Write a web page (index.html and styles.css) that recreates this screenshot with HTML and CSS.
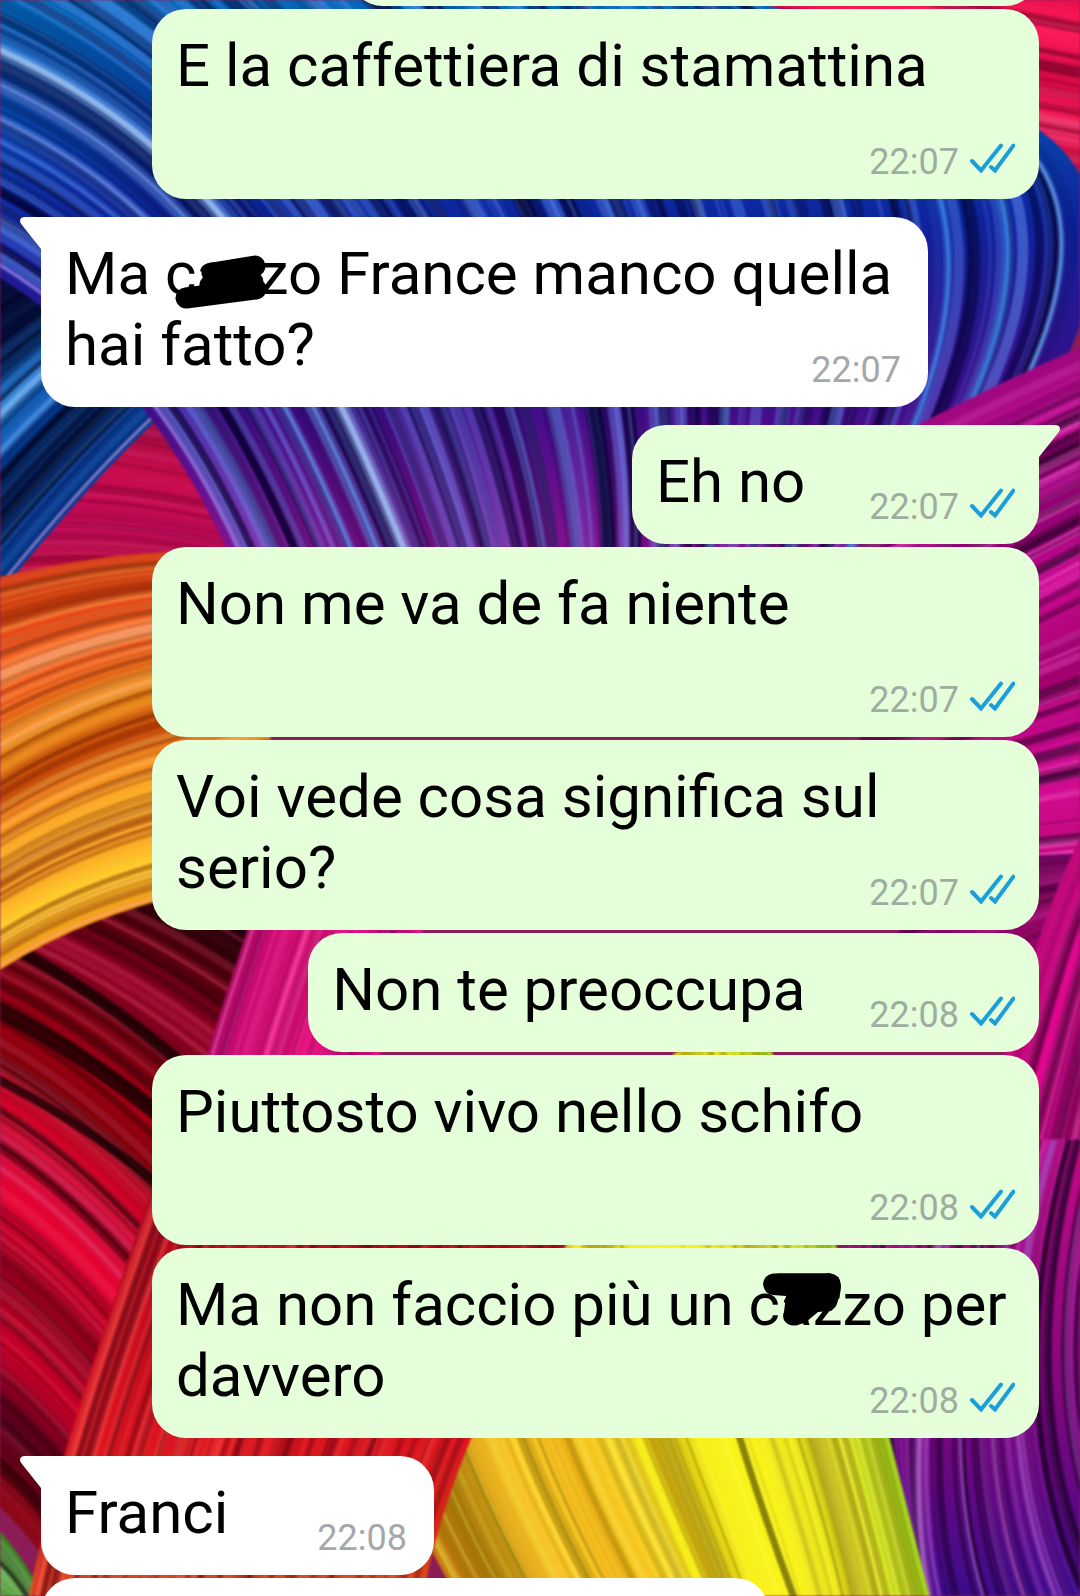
FILE: index.html
```html
<!DOCTYPE html>
<html lang="it">
<head>
<meta charset="utf-8">
<meta name="viewport" content="width=device-width, initial-scale=1">
<title>Chat</title>
<link rel="stylesheet" href="styles.css">
</head>
<body>
<svg class="wallpaper" id="wallpaper" viewBox="0 0 1080 1596" preserveAspectRatio="xMidYMid slice" aria-hidden="true">
  <defs>
    <linearGradient id="blue-violet" gradientUnits="userSpaceOnUse" x1="0" y1="0" x2="0" y2="550">
      <stop offset="0" stop-color="#0468b8"/><stop offset=".2" stop-color="#0848ac"/><stop offset=".4" stop-color="#0e239c"/><stop offset=".72" stop-color="#3a0d88"/><stop offset="1" stop-color="#84128f"/>
    </linearGradient>
    <linearGradient id="magenta-indigo" gradientUnits="userSpaceOnUse" x1="0" y1="1150" x2="0" y2="1596">
      <stop offset="0" stop-color="#c20a86"/><stop offset=".5" stop-color="#86087e"/><stop offset=".75" stop-color="#640882"/><stop offset="1" stop-color="#3c0c8c"/>
    </linearGradient>
    <linearGradient id="red-orange" gradientUnits="userSpaceOnUse" x1="0" y1="1200" x2="0" y2="1596">
      <stop offset="0" stop-color="#ae061c"/><stop offset=".6" stop-color="#dc1420"/><stop offset=".85" stop-color="#d02c18"/><stop offset="1" stop-color="#e0581c"/>
    </linearGradient>
  </defs>
</svg>

<svg class="sprite" aria-hidden="true">
  <symbol id="ticks" viewBox="0 0 45 30">
    <path d="M2 18 11 27.500 31 2.500M21 24 25 27.500 43.500 2.500" fill="none" stroke="#1b9fdb" stroke-width="4" stroke-linecap="round" stroke-linejoin="miter"/>
  </symbol>
</svg>

<main class="chat">
  <div class="group group--sent">
    <article class="bubble bubble--first"></article>
    <article class="bubble"><p>E la caffettiera di stamattina</p><span class="meta"><time>22:07</time><svg class="ticks" role="img" aria-label="Letto"><use href="#ticks"/></svg></span></article>
  </div>
  <div class="group group--received">
    <article class="bubble bubble--tail"><p>Ma cazzo France manco quella hai fatto?</p><span class="meta"><time>22:07</time></span><svg class="scribble scribble--near" viewBox="0 0 110 72" aria-hidden="true"><path d="M21 60 91 51M47 35 90 28M50 44 88 44" fill="none" stroke="#000" stroke-width="21" stroke-linecap="round"/></svg></article>
  </div>
  <div class="group group--sent">
    <article class="bubble bubble--tail"><p>Eh no</p><span class="meta"><time>22:07</time><svg class="ticks" role="img" aria-label="Letto"><use href="#ticks"/></svg></span></article>
    <article class="bubble bubble--stacked"><p>Non me va de fa niente</p><span class="meta"><time>22:07</time><svg class="ticks" role="img" aria-label="Letto"><use href="#ticks"/></svg></span></article>
    <article class="bubble"><p>Voi vede cosa significa sul serio?</p><span class="meta"><time>22:07</time><svg class="ticks" role="img" aria-label="Letto"><use href="#ticks"/></svg></span></article>
    <article class="bubble"><p>Non te preoccupa</p><span class="meta"><time>22:08</time><svg class="ticks" role="img" aria-label="Letto"><use href="#ticks"/></svg></span></article>
    <article class="bubble"><p>Piuttosto vivo nello schifo</p><span class="meta"><time>22:08</time><svg class="ticks" role="img" aria-label="Letto"><use href="#ticks"/></svg></span></article>
    <article class="bubble"><p>Ma non faccio più un cazzo per davvero</p><span class="meta"><time>22:08</time><svg class="ticks" role="img" aria-label="Letto"><use href="#ticks"/></svg></span><svg class="scribble scribble--far" viewBox="0 0 110 72" aria-hidden="true"><path d="M24 4.500C36 3.500 64 5 80 4Q91 5 92 16Q92 24 89 30Q89 37 82 42L69 43 57 53Q48 58 39 54Q33 51 35 43L37 27 24 26Q15 25 14 15Q15 6 24 4.500Z"/></svg></article>
  </div>
  <div class="group group--received">
    <article class="bubble bubble--tail"><p>Franci</p><span class="meta"><time>22:08</time></span></article>
    <article class="bubble bubble--last"></article>
  </div>
</main>
<script src="wallpaper.js"></script>
</body>
</html>
```
FILE: styles.css
```css
* {
  box-sizing: border-box;
}

body {
  margin: 0;
  background: #8c1c58;
  color: #000;
  font-family: Roboto, "Liberation Sans", sans-serif;
}

.wallpaper {
  position: fixed;
  inset: 0;
  width: 100%;
  height: 100%;
  background: #8c1c58;
  filter: blur(1px);
}

.sprite {
  position: absolute;
  width: 0;
  height: 0;
}

.chat {
  position: relative;
  display: flex;
  flex-direction: column;
  gap: 18px;
  height: 100vh;
  padding: 0 41px;
  overflow: hidden;
}

.group {
  display: flex;
  flex: none;
  flex-direction: column;
  gap: 3px;
}

.group--sent {
  --bubble: #e5ffda;
  --meta-gap: 64px;
  --meta: #9eada0;
  align-items: flex-end;
}

.group--received {
  --bubble: #fff;
  --meta-gap: 89px;
  --meta: #a5a8ab;
  align-items: flex-start;
}

.bubble {
  position: relative;
  display: flow-root;
  min-height: 119px;
  max-width: calc(100% - 111px);
  padding: 21px 24px 0;
  border-radius: 34px;
  background: var(--bubble);
}

/* The list is scrolled: only the lower edge of this bubble is in view. */
.bubble--first {
  width: 690px;
  margin-top: -113px;
}

.bubble--last {
  width: 728px;
}

/* The footer of this bubble has a line of its own. */
.bubble--stacked {
  width: 100%;
}

.bubble p {
  display: inline;
  margin: 0;
  font-size: 60px;
  line-height: 71px;
}

.bubble--stacked p {
  display: block;
}

.group--received .bubble--tail {
  border-top-left-radius: 0;
}

.group--sent .bubble--tail {
  border-top-right-radius: 0;
}

.bubble--tail::before {
  content: "";
  position: absolute;
  top: 0;
  left: -21px;
  width: 22px;
  height: 33px;
  background: var(--bubble);
  clip-path: path("M22 0H5Q0 0 0 4Q0 6 2 8L21 32H22Z");
}

.group--sent .bubble--tail::before {
  right: -21px;
  left: auto;
  transform: scaleX(-1);
}

.meta {
  float: right;
  display: flex;
  align-items: flex-end;
  gap: 11px;
  height: 98px;
  margin-left: var(--meta-gap);
  padding-bottom: 16px;
  color: var(--meta);
  font-size: 36px;
  line-height: 42px;
}

.group--received .meta {
  padding-right: 3px;
}

.ticks {
  width: 45px;
  height: 30px;
  margin-bottom: 10px;
}

/* Hand-drawn marks that cover part of a word. */
.scribble {
  position: absolute;
  top: 21px;
  width: 110px;
  height: 72px;
}

.scribble--near {
  left: 124px;
}

.scribble--far {
  left: 597px;
}
```
FILE: wallpaper.js
```js
// Draws the wallpaper: ribbons of fine strands, each one blended between guide curves.
const svg = document.getElementById("wallpaper");
let seed = 7;
const rnd = () => {
  seed = (seed * 16807) % 2147483647;
  return seed / 2147483647;
};
const mix = (list, t) => {
  const p = Math.min(t, 0.9999) * (list.length - 1);
  const i = Math.floor(p);
  return list[i].map((v, k) => v + (list[i + 1][k] - v) * (p - i));
};
const hex = (c) => [1, 3, 5].map((i) => parseInt(c.slice(i, i + 2), 16));

function stroke(g, paint, width, opacity) {
  const el = document.createElementNS("http://www.w3.org/2000/svg", "path");
  el.setAttribute("d", `M${g[0]} ${g[1]}C${g[2]} ${g[3]} ${g[4]} ${g[5]} ${g[6]} ${g[7]}`);
  el.setAttribute("fill", "none");
  el.setAttribute("stroke", paint);
  el.setAttribute("stroke-width", width);
  el.setAttribute("stroke-opacity", opacity);
  svg.appendChild(el);
}

function ribbon({ guides, colors, paint, n, light = "#ffffff", dark = "#000000", power = 0.4, shine = [], edge }) {
  const span = Math.max(...[0, 2, 4, 6].map((k) => {
    let d = 0;
    for (let i = 1; i < guides.length; i++) {
      d += Math.hypot(guides[i][k] - guides[i - 1][k], guides[i][k + 1] - guides[i - 1][k + 1]);
    }
    return d;
  }));
  const step = span / n;
  const palette = colors && colors.map(hex);
  for (let i = 0; i <= n; i++) {
    const t = i / n;
    const c = palette ? `rgb(${mix(palette, t).map(Math.round)})` : paint;
    stroke(mix(guides, t), c, step * 1.8, 1);
  }
  for (let i = 0; i < n * 1.4; i++) {
    const t = rnd();
    const lit = rnd() > 0.52;
    stroke(mix(guides, t), lit ? light : dark, 2 + rnd() * step, rnd() * power * (lit ? 0.5 : 0.85));
  }
  shine.forEach(([t, w, c]) => {
    stroke(mix(guides, t), c, w * 2.4, 0.3);
    stroke(mix(guides, t), c, w, 0.75);
  });
  if (edge) stroke(guides[edge.at], edge.color, 3, 0.8);
}

// Magenta ground behind the upper part
ribbon({
  guides: [[-20, 400, 100, 410, 180, 430, 300, 460], [-20, 600, 100, 580, 200, 590, 300, 620]],
  colors: ["#a00c40", "#c80c4c", "#c00a58", "#b00c30"], n: 26, light: "#ff4fa0", dark: "#50001c"
});
// Crimson strands, upper right
ribbon({
  guides: [[720, -60, 850, -50, 980, -30, 1120, 0], [720, 120, 850, 130, 980, 160, 1120, 185]],
  colors: ["#e00a48", "#ff1c5c", "#d80a48", "#f01450", "#b80838"], n: 26, light: "#ff6b9c", dark: "#6c0024", power: 0.6
});
// Dark blue band running up from the left
ribbon({
  guides: [[-20, 250, 30, 230, 100, 200, 180, 150], [-10, 425, 50, 360, 100, 330, 200, 240], [0, 585, 70, 500, 130, 430, 250, 330]],
  colors: ["#101c80", "#06103c", "#020a34", "#1870c8", "#06409c", "#041a58", "#083c94"], n: 60,
  light: "#3d8ce6", dark: "#000014", power: 0.6, shine: [[0.5, 6, "#78b4f0"], [0.61, 4, "#4a90e0"]], edge: { at: 2, color: "#9a8cd8" }
});
// Wide band turning from blue into violet
ribbon({
  guides: [
    [-5, 262, 90, 320, 170, 400, 240, 552],
    [-5, 48, 200, 140, 300, 290, 405, 552],
    [-30, -190, 380, 20, 510, 320, 545, 552],
    [440, -140, 745, 80, 760, 330, 715, 552],
    [990, 120, 1135, 160, 1115, 340, 920, 552]
  ],
  paint: "url(#blue-violet)", n: 130, light: "#6fa0ff", dark: "#02002c", power: 0.75,
  shine: [[0.25, 6, "#a7cfff"], [0.17, 4, "#6890f0"], [0.21, 2, "#6890e8"], [0.91, 4, "#3f88e8"], [0.95, 5, "#3c88e4"], [0.985, 3, "#68a4f0"]],
  edge: { at: 0, color: "#9a74dc" }
});
// Magenta strands along the right side
ribbon({
  guides: [[860, 462, 960, 410, 1030, 375, 1110, 342], [860, 660, 960, 640, 1030, 600, 1110, 555], [860, 872, 960, 862, 1040, 854, 1110, 848]],
  colors: ["#a00880", "#c00890", "#8c0070", "#cc0c94", "#a0006c", "#d60c98", "#c4087c"], n: 70,
  light: "#ff70dc", dark: "#30002c", power: 0.7, edge: { at: 2, color: "#f14cc8" }
});
ribbon({
  guides: [[900, 870, 960, 868, 1030, 864, 1110, 860], [900, 1000, 960, 970, 1030, 950, 1110, 910]],
  colors: ["#70045c", "#980468"], n: 14, light: "#d850a0", dark: "#200018"
});
ribbon({
  guides: [[1110, 800, 1060, 880, 1040, 960, 1010, 1060], [1130, 900, 1085, 1010, 1065, 1150, 1020, 1300], [1160, 1000, 1130, 1100, 1120, 1200, 1110, 1300]],
  colors: ["#c00878", "#e00890", "#a80474", "#d4088c", "#b80a90"], n: 40, light: "#ff50bc", dark: "#5c0040", power: 0.6
});
// Maroon and crimson folds, left
ribbon({
  guides: [[-20, 830, 100, 860, 220, 910, 320, 990], [-20, 1000, 80, 1050, 180, 1140, 260, 1240], [-20, 1180, 60, 1230, 130, 1310, 200, 1410], [-20, 1480, 20, 1510, 60, 1560, 90, 1620]],
  colors: ["#24000c", "#54000c", "#8c0024", "#6c0010", "#a80018", "#800008", "#d00428", "#c80430", "#e80434", "#90001c", "#c80028", "#50001c", "#8c0818"],
  n: 80, light: "#ff4f78", dark: "#180000", power: 0.5,
  shine: [[0.56, 6, "#cc2450"], [0.62, 4, "#e02c5c"]]
});
for (const [t, w] of [[950, 12], [1020, 16], [1090, 9]]) {
  stroke([-20, t - 20, 80, t + 30, 150, t + 80, 280, t + 200], "#0c0000", w, 0.75);
}
// Green corner
ribbon({
  guides: [[-10, 1530, 0, 1540, 18, 1560, 38, 1600], [-10, 1600, 0, 1600, 10, 1605, 20, 1610]],
  colors: ["#387c20", "#78b860", "#489830"], n: 10
});
// Orange to yellow arc, left
ribbon({
  guides: [[-10, 583, 80, 562, 160, 550, 270, 556], [-10, 770, 90, 705, 180, 685, 270, 665], [-10, 972, 50, 932, 120, 900, 270, 870]],
  colors: ["#d8401c", "#d04010", "#ec4c1c", "#f8702c", "#f85820", "#ec7c1c", "#f0901c", "#c84808", "#f89020", "#fcb42c", "#f8a024", "#ffd02c", "#f0a018"], n: 90,
  light: "#ffc45c", dark: "#782000", power: 0.6, shine: [[0.26, 8, "#ffa470"], [0.45, 4, "#ffac58"]], edge: { at: 2, color: "#ffa060" }
});
// Magenta band crossing the centre
ribbon({
  guides: [[254, 925, 240, 970, 225, 1010, 208, 1070], [420, 925, 400, 970, 390, 1010, 370, 1070]],
  colors: ["#b00868", "#d40c78", "#b80460", "#f01888", "#c00470", "#e01480"], n: 30, light: "#ff5cae", dark: "#680040", power: 0.5,
  shine: [[0.33, 4, "#ff3c9c"]], edge: { at: 0, color: "#d84890" }
});
// Violet strands, lower right
ribbon({
  guides: [[850, 1240, 860, 1400, 900, 1530, 905, 1620], [940, 1240, 915, 1400, 910, 1530, 935, 1620], [1040, 1140, 980, 1320, 985, 1500, 1050, 1640], [1085, 1140, 1030, 1360, 1060, 1520, 1140, 1640], [1150, 1140, 1085, 1300, 1090, 1420, 1170, 1600]],
  paint: "url(#magenta-indigo)", n: 70, light: "#c060d8", dark: "#180024", power: 0.65,
  shine: [[0.25, 5, "#b060c8"], [0.38, 2, "#9850c0"], [0.48, 3, "#a044b4"], [0.57, 3, "#9848b8"]]
});
// Yellow fan
ribbon({
  guides: [[340, 1240, 360, 1400, 420, 1530, 490, 1640], [540, 1240, 560, 1400, 640, 1540, 690, 1640], [680, 1050, 760, 1300, 830, 1480, 860, 1640], [765, 1050, 855, 1300, 885, 1450, 935, 1640]],
  colors: ["#c87c10", "#a07408", "#e8b020", "#fcc824", "#ecb018", "#fcd828", "#c4a410", "#f8f018", "#fcf41c", "#f4f020", "#a89c10", "#f4f838", "#dce828", "#c8e824", "#a4d420"], n: 80,
  light: "#ffff60", dark: "#786400", power: 0.5, shine: [[0.4, 8, "#fcf81c"], [0.55, 8, "#fcf81c"]]
});
stroke([700, 1300, 730, 1410, 760, 1510, 810, 1640], "#4c4400", 7, 0.65);
// Red band, bottom left
ribbon({
  guides: [[170, 1150, 120, 1300, 65, 1440, 28, 1620], [330, 1150, 270, 1300, 210, 1440, 170, 1620], [610, 1150, 520, 1330, 450, 1440, 422, 1580]],
  paint: "url(#red-orange)", n: 90, light: "#ff5850", dark: "#600010", power: 0.6,
  edge: { at: 0, color: "#d03038" }
});
```
